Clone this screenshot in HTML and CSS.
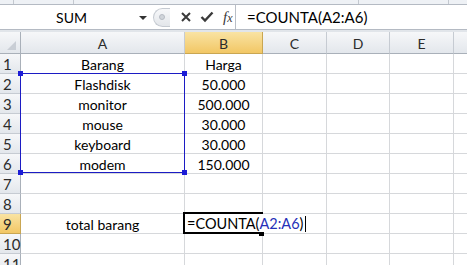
FILE: index.html
```html
<!DOCTYPE html>
<html lang="en">
<head>
    <meta charset="UTF-8">
    <title>COUNTA - Excel</title>
    <link rel="stylesheet" href="styles.css">
</head>
<body>
    <div class="ribbon-edge">
        <span class="edge-line l1"></span>
        <span class="edge-line l2"></span>
        <span class="edge-line l3"></span>
        <span class="edge-line l4"></span>
    </div>

    <div class="formula-bar">
        <div class="name-box">
            <span class="name-text">SUM</span>
            <span class="drop-arrow"></span>
        </div>
        <div class="fx-tools">
            <span class="grip"><span class="grip-dot"></span></span>
            <svg class="tool" width="12" height="12" viewBox="0 0 12 12">
                <path d="M2 2 L10 10 M10 2 L2 10" stroke="#3a3a3a" stroke-width="2" fill="none"/>
            </svg>
            <svg class="tool" width="14" height="12" viewBox="0 0 14 12">
                <path d="M1.5 6 L5 9.5 L12.5 1.5" stroke="#3a3a3a" stroke-width="2.4" fill="none"/>
            </svg>
            <span class="fx">f<span class="fx-x">x</span></span>
        </div>
        <div class="formula-input">=COUNTA(A2:A6)</div>
    </div>
    <div class="bar-gap"></div>

    <div class="sheet">
        <div class="hd corner"><span class="corner-tri"></span></div>
        <div class="hd col">A</div>
        <div class="hd col sel">B</div>
        <div class="hd col">C</div>
        <div class="hd col">D</div>
        <div class="hd col">E</div>
        <div class="hd col last"></div>

        <div class="hd row">1</div>
        <div class="cell">Barang</div><div class="cell">Harga</div><div class="cell"></div><div class="cell"></div><div class="cell"></div><div class="cell last"></div>

        <div class="hd row">2</div>
        <div class="cell">Flashdisk</div><div class="cell">50.000</div><div class="cell"></div><div class="cell"></div><div class="cell"></div><div class="cell last"></div>

        <div class="hd row">3</div>
        <div class="cell">monitor</div><div class="cell">500.000</div><div class="cell"></div><div class="cell"></div><div class="cell"></div><div class="cell last"></div>

        <div class="hd row">4</div>
        <div class="cell">mouse</div><div class="cell">30.000</div><div class="cell"></div><div class="cell"></div><div class="cell"></div><div class="cell last"></div>

        <div class="hd row">5</div>
        <div class="cell">keyboard</div><div class="cell">30.000</div><div class="cell"></div><div class="cell"></div><div class="cell"></div><div class="cell last"></div>

        <div class="hd row">6</div>
        <div class="cell">modem</div><div class="cell">150.000</div><div class="cell"></div><div class="cell"></div><div class="cell"></div><div class="cell last"></div>

        <div class="hd row">7</div>
        <div class="cell"></div><div class="cell"></div><div class="cell"></div><div class="cell"></div><div class="cell"></div><div class="cell last"></div>

        <div class="hd row">8</div>
        <div class="cell"></div><div class="cell"></div><div class="cell"></div><div class="cell"></div><div class="cell"></div><div class="cell last"></div>

        <div class="hd row sel">9</div>
        <div class="cell">total barang</div><div class="cell"></div><div class="cell"></div><div class="cell"></div><div class="cell"></div><div class="cell last"></div>

        <div class="hd row">10</div>
        <div class="cell"></div><div class="cell"></div><div class="cell"></div><div class="cell"></div><div class="cell"></div><div class="cell last"></div>

        <div class="hd row">11</div>
        <div class="cell"></div><div class="cell"></div><div class="cell"></div><div class="cell"></div><div class="cell"></div><div class="cell last"></div>

        <!-- range highlight for A2:A6 -->
        <div class="range">
            <span class="handle tl"></span>
            <span class="handle tr"></span>
            <span class="handle bl"></span>
            <span class="handle br"></span>
        </div>

        <!-- cell B9 in edit mode -->
        <div class="active-cell"></div>
        <div class="edit-text">=COUNTA(<span class="ref">A2:A6</span>)<span class="caret"></span></div>
        <span class="fill-handle"></span>
    </div>
</body>
</html>
```

FILE: styles.css
```css
* {
    margin: 0;
    padding: 0;
    box-sizing: border-box;
}

body {
    width: 467px;
    height: 265px;
    overflow: hidden;
    background: #ffffff;
    font-family: 'Lato', 'Open Sans', sans-serif;
    color: #000000;
}

/* Bottom of the ribbon */
.ribbon-edge {
    position: relative;
    height: 5px;
    background: #eef1f5;
    border-bottom: 1px solid #b4bac3;
}

.edge-line {
    position: absolute;
    top: 0;
    width: 1px;
    height: 4px;
    background: #c3c8cf;
}

.l1 { left: 13px; }
.l2 { left: 73px; }
.l3 { left: 358px; }
.l4 { left: 448px; }

/* Formula bar */
.formula-bar {
    display: flex;
    height: 24px;
    background: #ffffff;
}

.name-box {
    width: 153px;
    display: flex;
    align-items: center;
}

.name-text {
    flex: 1;
    text-align: center;
    font-size: 14px;
    padding-left: 4px;
}

.drop-arrow {
    width: 0;
    height: 0;
    border-left: 4px solid transparent;
    border-right: 4px solid transparent;
    border-top: 4px solid #333;
    margin-right: 6px;
    margin-top: 1px;
}

.fx-tools {
    width: 83px;
    display: flex;
    align-items: center;
    border-right: 1px solid #b9bec6;
}

.grip {
    width: 17px;
    height: 19px;
    border: 1px solid #c5cad1;
    border-right: none;
    border-radius: 10px 0 0 10px;
    background: linear-gradient(#f7f8fa, #e3e6ea);
    display: flex;
    align-items: center;
    justify-content: center;
    margin-right: 10px;
}

.grip-dot {
    width: 6px;
    height: 6px;
    border-radius: 50%;
    background: #d0d4da;
    border: 1px solid #b7bcc4;
}

.tool {
    margin-right: 8px;
}

.fx {
    font-family: 'Liberation Serif', serif;
    font-style: italic;
    font-size: 15px;
    color: #3a3a3a;
    margin-left: 1px;
}

.fx-x {
    font-size: 12px;
}

.formula-input {
    flex: 1;
    padding-left: 11px;
    font-size: 15px;
    line-height: 24px;
}

.bar-gap {
    height: 3px;
    background: #e1e5ea;
    border-top: 1px solid #b4bac3;
}

/* Worksheet grid */
.sheet {
    position: relative;
    display: grid;
    grid-template-columns: 21px 164px 78px 64px 63px 64px 13px;
    grid-template-rows: 22px repeat(11, 20px);
    font-size: 14px;
}

.hd {
    background: linear-gradient(#f6f7f9, #e3e7ec);
    color: #2b2b2b;
    border-right: 1px solid #c6cbd2;
    border-bottom: 1px solid #c6cbd2;
    display: flex;
    align-items: center;
    justify-content: center;
}

.hd.col {
    border-bottom-color: #a9b0b9;
    padding-top: 1px;
}

.hd.row {
    justify-content: flex-start;
    padding-left: 3px;
    font-size: 15px;
    border-right-color: #a9b0b9;
}

.hd.sel {
    background: linear-gradient(#f9e3a3, #f2c765);
    border-color: #c9a652;
}

.hd.last {
    border-right: none;
}

.corner {
    position: relative;
    border-right-color: #a9b0b9;
    border-bottom-color: #a9b0b9;
}

.corner-tri {
    position: absolute;
    right: 4px;
    bottom: 3px;
    width: 0;
    height: 0;
    border-left: 9px solid transparent;
    border-bottom: 9px solid #c9ced5;
}

.cell {
    border-right: 1px solid #d6d8db;
    border-bottom: 1px solid #d6d8db;
    display: flex;
    align-items: center;
    justify-content: center;
    white-space: nowrap;
    padding-top: 1px;
}

.cell.last {
    border-right: none;
}

/* Highlighted reference range */
.range {
    position: absolute;
    left: 20px;
    top: 41px;
    width: 165px;
    height: 100px;
    border: 1px solid #1c1cc4;
}

.handle {
    position: absolute;
    width: 5px;
    height: 5px;
    background: #1c1cd6;
}

.tl { left: -3px; top: -3px; }
.tr { right: -3px; top: -3px; }
.bl { left: -3px; bottom: -3px; }
.br { right: -3px; bottom: -3px; }

/* Active cell being edited */
.active-cell {
    position: absolute;
    left: 183px;
    top: 180px;
    width: 80px;
    height: 22px;
    border: 2px solid #000000;
    border-right: none;
}

.edit-text {
    position: absolute;
    left: 185px;
    top: 182px;
    height: 18px;
    padding: 0 1px 0 2px;
    background: #ffffff;
    white-space: nowrap;
    font-size: 14.5px;
    line-height: 19px;
}

.ref {
    color: #2630b8;
}

.caret {
    display: inline-block;
    vertical-align: middle;
    width: 1px;
    height: 16px;
    background: #000;
    margin-left: 2px;
    margin-top: -2px;
}

.fill-handle {
    position: absolute;
    left: 259px;
    top: 200px;
    width: 5px;
    height: 4px;
    background: #000;
}
```
